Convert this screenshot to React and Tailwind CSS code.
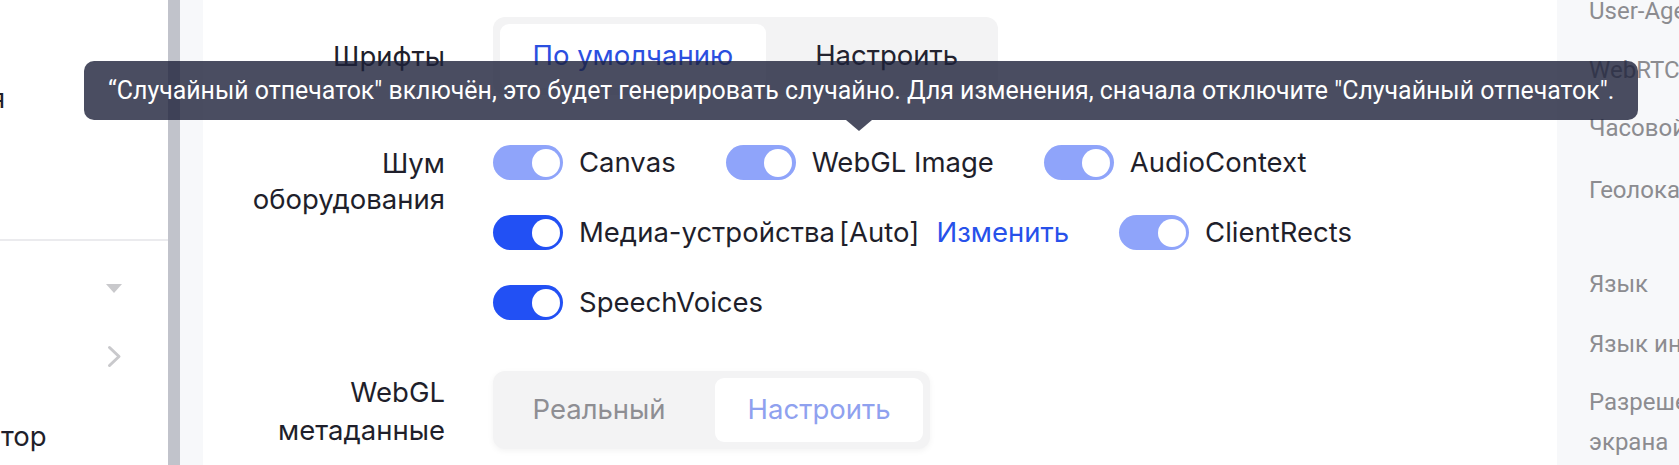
import React from "react";

function Toggle({ strong }) {
  return (
    <span
      className={`flex h-[35px] w-[70px] shrink-0 items-center justify-end rounded-full p-[3.5px] ${
        strong ? "bg-[#2250f4]" : "bg-[#8fa4fa]"
      }`}
    >
      <span className="h-[28px] w-[28px] rounded-full bg-white" />
    </span>
  );
}

function Option({ label, tag, strong, link }) {
  return (
    <div className="flex h-[35px] items-center">
      <Toggle strong={strong} />
      <span className="ml-[16px] whitespace-nowrap text-[27.5px] text-[#1f1f2b]">
        {label}
        {tag && <span className="ml-[4px]">{tag}</span>}
      </span>
      {link && (
        <span className="ml-[17px] whitespace-nowrap text-[27.5px] text-[#2751ea]">
          {link}
        </span>
      )}
    </div>
  );
}

export default function App() {
  return (
    <div className="relative flex h-[465px] w-[1679px] overflow-hidden bg-white font-['Inter',sans-serif]">
      {/* left menu, scrolled partly out of view */}
      <aside className="flex w-[168px] shrink-0 flex-col overflow-hidden text-[27.5px] text-[#1f1f2b]">
        <div className="h-[239px] pt-[79px] leading-[38px]">
          <span className="-ml-[10px] block whitespace-nowrap">я</span>
        </div>
        <div className="h-[2px] bg-[#ebebee]" />
        <div className="flex justify-end pr-[46px] pt-[43px]">
          <span className="h-0 w-0 border-x-[8px] border-t-[9px] border-x-transparent border-t-[#c9c9cc]" />
        </div>
        <div className="flex justify-end pr-[46px] pt-[52px]">
          <svg width="15" height="23" viewBox="0 0 15 23" fill="none">
            <path
              d="M2.5 2.5 L12 11.5 L2.5 20.5"
              stroke="#c9c9cc"
              strokeWidth="3"
              strokeLinecap="round"
              strokeLinejoin="round"
            />
          </svg>
        </div>
        <div className="pt-[49px] leading-[38px]">
          <span className="ml-[1px] block whitespace-nowrap">тор</span>
        </div>
      </aside>

      <div className="w-[12px] shrink-0 bg-[#c1c3cb]" />
      <div className="w-[23px] shrink-0 bg-[#f7f8fa]" />

      {/* form */}
      <main className="flex-1 pt-[17px] text-[#1f1f2b]">
        <div className="flex items-center">
          <div className="w-[242px] text-right text-[27.5px] leading-[36px]">Шрифты</div>
          <div className="ml-[48px] flex gap-[17px] rounded-[12px] bg-[#f3f3f4] p-[7px] text-[27.5px]">
            <div className="flex h-[64px] items-center rounded-[9px] bg-white px-[32.5px] text-[#2b4fe0]">
              По умолчанию
            </div>
            <div className="flex h-[64px] items-center px-[32.5px] text-[#23232f]">
              Настроить
            </div>
          </div>
        </div>

        <div className="mt-[50px] flex items-start">
          <div className="w-[242px] text-right text-[27.5px] leading-[36px]">
            Шум
            <br />
            оборудования
          </div>
          <div className="ml-[48px] flex flex-1 flex-wrap gap-x-[50px] gap-y-[35px] pr-[120px]">
            <Option label="Canvas" />
            <Option label="WebGL Image" />
            <Option label="AudioContext" />
            <Option label="Медиа-устройства" tag="[Auto]" strong link="Изменить" />
            <Option label="ClientRects" />
            <Option label="SpeechVoices" strong />
          </div>
        </div>

        <div className="mt-[50px] flex items-center">
          <div className="w-[242px] pt-[3px] text-right text-[27.5px] leading-[38px]">
            WebGL
            <br />
            метаданные
          </div>
          <div className="ml-[48px] flex gap-[17px] rounded-[12px] bg-[#f3f3f4] p-[7px] text-[27.5px] shadow-[0_2px_6px_rgba(0,0,0,0.05)]">
            <div className="flex h-[64px] items-center px-[32.5px] text-[#8e8e93]">
              Реальный
            </div>
            <div className="flex h-[64px] items-center rounded-[9px] bg-white px-[32.5px] text-[#8fa1ef]">
              Настроить
            </div>
          </div>
        </div>
      </main>

      {/* right navigation */}
      <aside className="w-[122px] shrink-0 overflow-hidden bg-[#f7f8fa] pl-[32px] font-['Roboto',sans-serif] text-[24px] leading-[38.5px] text-[#8c8c90]">
        <div className="-mt-[8px] whitespace-nowrap">User-Agent</div>
        <div className="mt-[20px] whitespace-nowrap">WebRTC</div>
        <div className="mt-[20px] whitespace-nowrap">Часовой пояс</div>
        <div className="mt-[23px] whitespace-nowrap">Геолокация</div>
        <div className="mt-[56px] whitespace-nowrap">Язык</div>
        <div className="mt-[21px] whitespace-nowrap">Язык интерфейса</div>
        <div className="mt-[19px] leading-[40px]">
          <div className="whitespace-nowrap">Разрешение</div>
          <div className="whitespace-nowrap">экрана</div>
        </div>
      </aside>

      {/* tooltip */}
      <div className="absolute left-[84px] top-[61px] whitespace-nowrap rounded-[10px] bg-[rgba(29,32,58,0.8)] px-[24px] py-[10.5px] font-['Roboto',sans-serif] text-[24.9px] leading-[38px] text-white">
        “Случайный отпечаток" включён, это будет генерировать случайно. Для изменения, сначала отключите "Случайный отпечаток".
        <span className="absolute left-[762px] top-full h-0 w-0 border-x-[13.5px] border-t-[11px] border-x-transparent border-t-[rgba(29,32,58,0.8)]" />
      </div>
    </div>
  );
}
